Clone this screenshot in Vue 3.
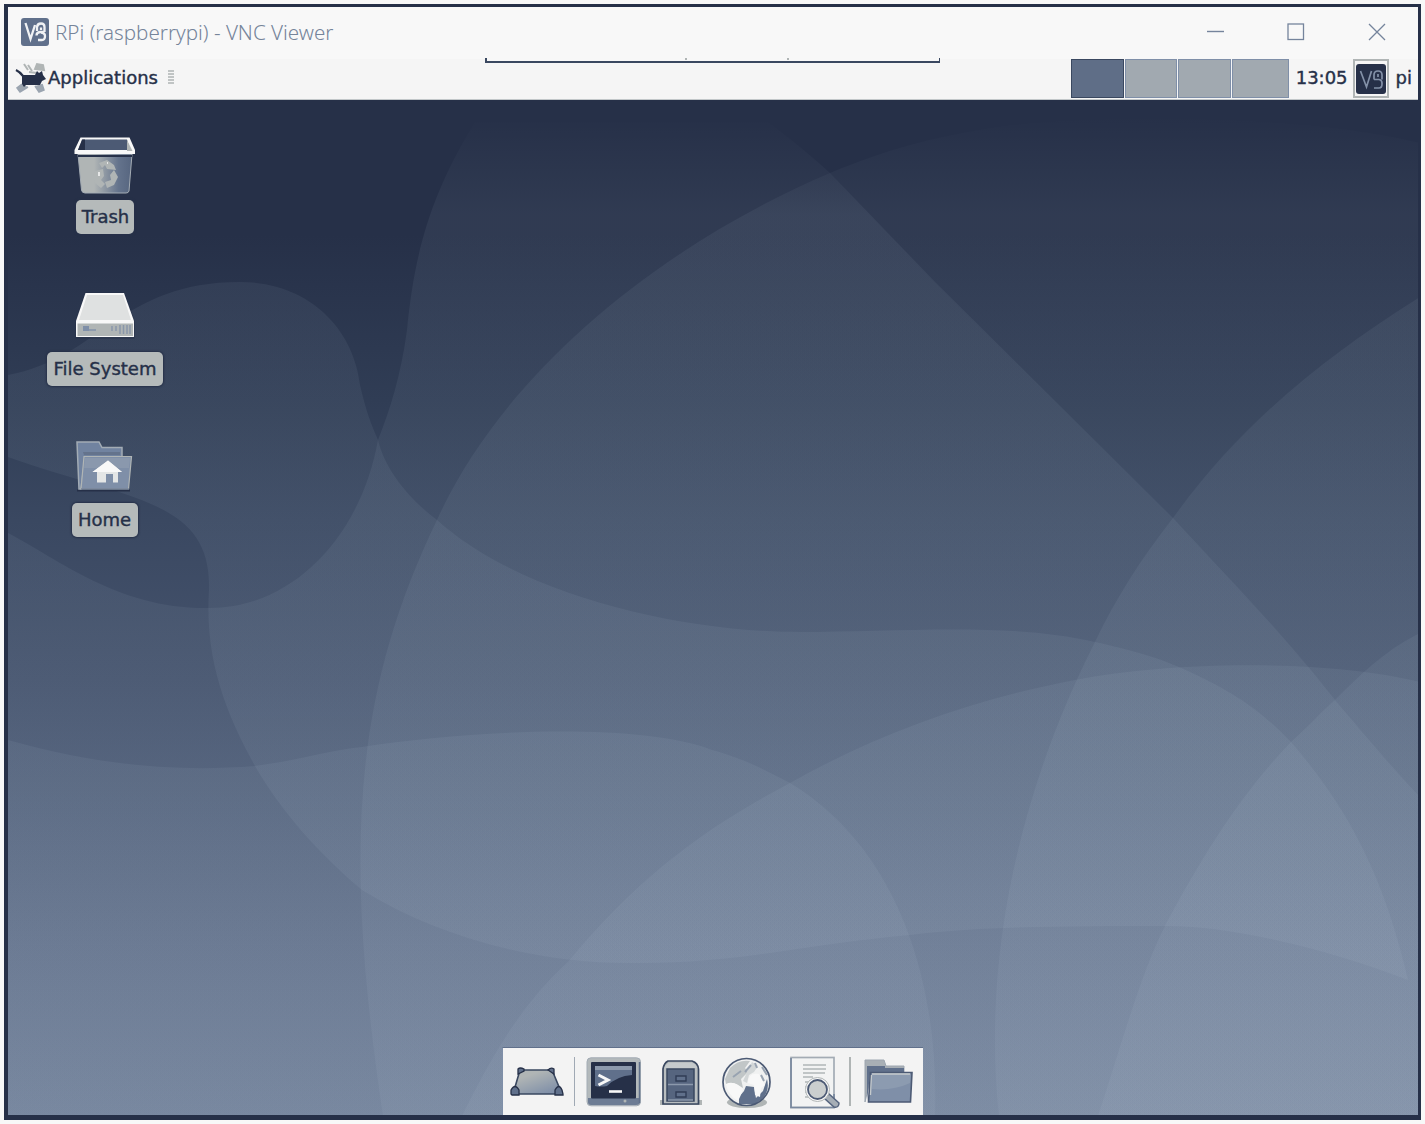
<script setup>
const workspaces = [
  { id: 1, active: true, w: 53 },
  { id: 2, active: false, w: 52 },
  { id: 3, active: false, w: 53 },
  { id: 4, active: false, w: 57 },
]
</script>

<template>
  <div class="screen">
    <div class="window">
      <header class="titlebar">
        <svg class="app-logo" width="28" height="28" viewBox="0 0 28 28">
          <rect width="28" height="28" rx="3" fill="#60708b" />
          <path d="M4.500 5 L9.500 21 L14 7 M16 13 V9 Q16.500 5.500 20 5.500 Q23.500 5.500 23.500 9 V14 M20 9.500 V12 M23.500 14 H19 Q15.500 14.500 15.500 17.500 M20 14.500 Q24 15 24 18 Q24 22 21 22 H17" fill="none" stroke="#f0f2f4" stroke-width="2.300" />
        </svg>
        <span class="title">RPi (raspberrypi) - VNC Viewer</span>
        <div class="controls">
          <svg width="18" height="18" viewBox="0 0 18 18"><path d="M1 8.500 H18" stroke="#75849c" stroke-width="1.400" /></svg>
          <svg width="18" height="18" viewBox="0 0 18 18"><rect x="1" y="1" width="15.500" height="15.500" fill="none" stroke="#75849c" stroke-width="1.300" /></svg>
          <svg width="18" height="18" viewBox="0 0 18 18"><path d="M1 1 L17 17 M17 1 L1 17" stroke="#75849c" stroke-width="1.300" /></svg>
        </div>
      </header>

      <div class="panel">
        <svg class="mouse" width="32" height="34" viewBox="0 0 32 34">
          <path d="M9 3 L13 9 M13 4 L17 10 M20 8 L22 3 L28 4 L29 9 Z M14 11 L22 12" fill="#b0b5b5" stroke="#b0b5b5" stroke-width="2" />
          <path d="M7 23 L2 27 L5 31 L13 26 M20 25 L24 31 L29 29 L27 23" fill="#9da6b0" stroke="#9aa4b0" stroke-width="1.500" />
          <path d="M1 9 Q5 11 8 15" fill="none" stroke="#263048" stroke-width="2.200" />
          <path d="M7 14 L20 14 L22 10 L24 12 L27 10 L28 14 L31 18 L27 20 L25 24 H21 L11 24 L9 26 L7 23 Z" fill="#263048" />
        </svg>
        <span class="menu">Applications</span>
        <div class="handle"><i v-for="n in 5" :key="n"></i></div>
        <div class="pager">
          <div v-for="w in workspaces" :key="w.id" class="ws" :class="{ active: w.active }" :style="{ width: w.w + 'px' }"></div>
        </div>
        <span class="clock">13:05</span>
        <div class="tray">
          <svg width="30" height="30" viewBox="0 0 30 30">
            <rect width="30" height="30" rx="3" fill="#263048" />
            <path d="M4.500 7 L10.500 23 L15.500 7 M18 15.500 V11 Q18 7 22 7 Q26 7 26 11 V15.500 M22 10 V13 M18 15.500 H23 Q26 16 26 19 V20 Q26 24 23 24 H18" fill="none" stroke="#8391a8" stroke-width="1.700" />
          </svg>
        </div>
        <span class="user">pi</span>
      </div>

      <main class="desktop">
        <svg class="wall" viewBox="8 100 1410 1015" preserveAspectRatio="none">
          <defs>
            <linearGradient id="base" gradientUnits="userSpaceOnUse" x1="0" y1="100" x2="0" y2="1115">
              <stop offset="0" stop-color="#263048" />
              <stop offset=".133" stop-color="#263048" />
              <stop offset=".295" stop-color="#303d55" />
              <stop offset=".414" stop-color="#3a4861" />
              <stop offset=".571" stop-color="#45536d" />
              <stop offset=".7" stop-color="#51607a" />
              <stop offset=".83" stop-color="#5f6e88" />
              <stop offset="1" stop-color="#6e7e97" />
            </linearGradient>
            <linearGradient id="veil" gradientUnits="userSpaceOnUse" x1="0" y1="115" x2="0" y2="1115">
              <stop offset="0" stop-color="#dcf0ff" stop-opacity="0" />
              <stop offset=".1" stop-color="#dcf0ff" stop-opacity=".056" />
              <stop offset=".6" stop-color="#dcf0ff" stop-opacity=".056" />
              <stop offset="1" stop-color="#dce8f4" stop-opacity=".05" />
            </linearGradient>
          </defs>
          <rect x="8" y="100" width="1410" height="1015" fill="url(#base)" />
          <g fill="url(#veil)">
            <path d="M1420 143 C1300 113 1080 113 985 129 C930 138 885 150 830 173 C650 250 500 380 437 520 C350 700 345 860 383 1116 H1420 Z" />
            <path d="M475 122 C427 200 414 260 407 330 C401 375 390 410 378 440 C360 540 290 608 210 608 C120 610 60 560 8 533 V1116 H1420 V797 C1385 760 1365 735 1335 700 C1280 630 1230 580 1173 518 L935 282 L830 173 C805 150 785 135 768 122 Z" />
            <path d="M8 375 C100 358 120 282 240 282 C310 282 354 330 360 385 C368 420 375 432 378 440 C385 470 410 500 437 520 C520 595 680 632 800 632 C900 632 1010 622 1095 642 C1140 652 1165 660 1190 672 C1240 695 1265 715 1291 742 C1350 810 1385 880 1408 980 C1330 950 1230 925 1165 926 C1080 926 980 926 910 935 C800 945 740 963 640 963 C540 965 440 938 362 890 C320 855 280 810 255 766 C230 720 204 665 209 590 C212 500 130 500 8 457 Z" />
            <path d="M1420 297 C1320 360 1240 425 1173 518 C1140 560 1115 600 1095 642 C1030 770 980 940 999 1116 H1420 Z" />
            <path d="M1420 633 C1385 650 1360 675 1335 700 C1320 713 1307 728 1291 742 C1235 800 1195 870 1165 926 C1140 975 1120 1050 1098 1116 H1420 Z" />
            <path d="M8 740 C100 766 180 772 255 766 C300 760 330 750 362 747 C470 730 640 722 712 750 C745 759 765 770 790 783 C885 840 940 960 935 1116 H8 Z" />
            <path d="M462 1116 C490 1060 520 1005 568 962 C640 875 705 828 790 783 C875 735 970 700 1075 680 C1180 660 1330 660 1420 682 V1116 Z" />
          </g>
        </svg>

        <div class="icons">
          <div class="item">
            <svg width="68" height="68" viewBox="0 0 68 68">
              <defs>
                <linearGradient id="bin" x1="0" x2="1"><stop offset=".3" stop-color="#b0b5b5" /><stop offset=".75" stop-color="#64738c" /><stop offset="1" stop-color="#56657f" /></linearGradient>
              </defs>
              <path d="M7 22 H61 L58 59 Q57.500 61 55 61 H14 Q11 61 10.500 58 Z" fill="url(#bin)" stroke="#a4acb4" stroke-width="1" />
              <path d="M7 23 H61 V25 H7 Z" fill="#263048" />
              <path d="M9.500 5.500 H58.500 L64 18 V22 H3.500 V18 Z" fill="#f8f8f8" />
              <path d="M11.500 7.500 H56 L59 18 H7 Z" fill="#4c5a74" />
              <path d="M11 7.500 H14 V18 H7 Z" fill="#263048" />
              <path d="M56 8 L61.500 19 H56 Z" fill="#b0b5b5" />
              <g fill="#b0b5b5"><path d="M28 31 L36 28 L43 33 L45 38 L36 37 L34 33 L31 36 Z" /><path d="M43 38 L47 45 L43 53 L36 56 L34 50 L40 48 L39 43 Z" /><path d="M24 39 L32 37 L33 44 L30 48 L34 52 L30 56 L24 51 L22 45 Z" /></g>
              <path d="M28 40 V44 M36 31 h1" stroke="#f8f8f8" stroke-width="1.500" />
            </svg>
            <span class="label">Trash</span>
          </div>
          <div class="item">
            <svg width="68" height="68" viewBox="0 0 68 68">
              <path d="M14 8 H53 L64 37 V54 Q64 55 62 55 H6 Q4 55 4 53 V37 Z" fill="#263048" opacity=".5" />
              <path d="M14.500 9 H53 L63 37 V53 H5 V37 Z" fill="#f8f8f8" />
              <path d="M16 11 H52 L60 36 H8 Z" fill="#dfe1e1" />
              <rect x="6.500" y="39.500" width="55.500" height="12.500" fill="#b0b5b5" />
              <rect x="12" y="42" width="6" height="5" fill="#7f8fa8" /><path d="M18 46 H25" stroke="#8d9aac" stroke-width="2" />
              <path d="M41 42 V47 M45 42 V47 M49 41 V50 M52.500 41 V50 M56 41 V50 M59 41 V50" stroke="#8997aa" stroke-width="1.500" />
            </svg>
            <span class="label">File System</span>
          </div>
          <div class="item">
            <svg width="68" height="68" viewBox="0 0 68 68">
              <path d="M6 55.500 H59" stroke="#263048" stroke-width="2" />
              <path d="M6 7 H28 L31 12.500 H51 V22 H14 L10 54 H8 Z" fill="#7183a0" stroke="#a3acb5" stroke-width="1.500" />
              <path d="M12 17 H49 V20 H13 Z" fill="#64738c" />
              <path d="M13 21.500 H60.500 L57.500 54 H10 Z" fill="#7f8fa8" stroke="#b0b5b5" stroke-width="1.200" />
              <path d="M14 23 H59 L58 33 H13 Z" fill="#8a98ad" />
              <path d="M10 54 H58" stroke="#60708b" />
              <path d="M37 25.500 L51 37 H47 V47.500 H42 V39 H35 V47.500 H26 V37 H21.500 Z" fill="#e4e6e6" />
              <path d="M37 25.500 L51 37 H21.500 Z" fill="#f8f8f8" />
            </svg>
            <span class="label">Home</span>
          </div>
        </div>

        <nav class="dock">
          <svg width="55" height="50" viewBox="0 0 55 50">
            <defs><linearGradient id="desk" x1="0" y1="0" x2=".7" y2="1"><stop offset=".3" stop-color="#b0b5b5" /><stop offset="1" stop-color="#7f8fa8" /></linearGradient></defs>
            <path d="M10 13 H42 L52 37 H3 Z" fill="url(#desk)" stroke="#3a4860" stroke-width="1.600" />
            <g fill="#60708b" stroke="#263048" stroke-width="1.300"><path d="M8 17 V12 Q10 10 14 12 V14 Z" /><path d="M38 13 Q41 10 44 12 V17 Z" /><path d="M1 37 V33 Q5 26 9 33 V38 H2 Z" /><path d="M45 38 V33 Q49 26 52 33 L53 37 V38 Z" /></g>
          </svg>
          <i class="sep"></i>
          <svg class="term" width="56" height="50" viewBox="0 0 56 50">
            <rect x="1" y=".8" width="53.500" height="48" rx="4" fill="#b3b9bb" stroke="#a3acb5" />
            <path d="M2 41 H54 V45 Q54 48 50 48 H5 Q2 48 2 45 Z" fill="#6d7c94" />
            <path d="M53.500 5 V46" stroke="#60708b" stroke-width="1.500" />
            <rect x="5" y="5" width="45" height="36.500" rx="1" fill="#263048" />
            <path d="M9 9 H46 V18 Q31 19 21 29 Q15 30 9 29 Z" fill="#60708b" />
            <path d="M9 9 H46 V13 H9 Z" fill="#8c99ac" />
            <path d="M12.500 18 L22 23 L12.500 28" fill="none" stroke="#f8f8f8" stroke-width="3" />
            <path d="M23 34.500 H36" stroke="#f8f8f8" stroke-width="2.600" />
            <circle cx="39" cy="44" r="1.500" fill="#b0b5b5" />
          </svg>
          <svg class="cab" width="42" height="50" viewBox="0 0 42 50">
            <path d="M0 43 H42 V48 H0 Z" fill="#b0b5b5" />
            <path d="M8 4 H32 Q38 6 38.500 12 V47 H3 V12 Q4 6 8 4 Z" fill="#b9bec0" stroke="#3a4860" stroke-width="1.700" />
            <path d="M9 6 H32 Q36 7 37 11 H4.500 Q6 7 9 6 Z" fill="#c5cacc" />
            <path d="M7 12 H34 V44 H7 Z" fill="#56657f" stroke="#3a4860" stroke-width="1.500" />
            <path d="M8 27.500 H33 M8 43 H33" stroke="#8c99ac" stroke-width="1.300" />
            <path d="M16 19 H26 V24 H16 Z M16 35 H26 V40 H16 Z" fill="#60708b" stroke="#303c56" stroke-width="1.400" />
          </svg>
          <svg class="globe" width="52" height="52" viewBox="0 0 52 52">
            <ellipse cx="26" cy="45.500" rx="20" ry="5.500" fill="#b0b5b5" />
            <circle cx="25.500" cy="25" r="23.500" fill="#f0f1f1" />
            <path d="M9 11 Q18 2 29 4 L24 11 L27 15 L20 22 L22 31 L13 26 L5 27 L4 22 Z" fill="#c1c6c7" />
            <path d="M31 5 L37 9 L33 15 L28 18 L26 26 L22 24 L28 11 Z" fill="#d3d7d8" />
            <path d="M18 40 L23 34 L25 29 L33 30 L36 47 H18 Z" fill="#60708b" />
            <path d="M46 22 Q50 38 35 46 L34 42 L42 34 L44 28 Z" fill="#60708b" />
            <path d="M5 27 Q13 23 22 32 L19 40 L17 44 Q7 38 5 27 Z M27 26 Q27 15 38 17 L44 28 L40 31 L39 40 L34 38 L33 28 Z" fill="#f8f8f8" />
            <path d="M20 14 L12 20 M30 8 L24 15 M34 6 L36 11 M41 10 L46 18 M40 18 L43 24" fill="none" stroke="#98a3b1" stroke-width="2" />
            <circle cx="25.500" cy="25" r="23.500" fill="none" stroke="#4c5a74" stroke-width="1.700" />
          </svg>
          <svg class="find" width="52" height="54" viewBox="0 0 52 54">
            <rect x="2" y="1.500" width="43" height="50" fill="#f2f3f3" stroke="#a3abb4" stroke-width="1.700" />
            <path d="M2 2 V51.500 H45 V38" fill="none" stroke="#7a899f" stroke-width="1.700" />
            <path d="M14 9 H37 M14 13 H37 M14 17 H36 M14 21 H24 M16 26 H20 M16 31 H19 M16 36 H18 M16 41 H21" stroke="#c0c5c6" stroke-width="2" />
            <path d="M35 42 L40 38 L50 47 Q50 52 45 51 Z" fill="#a6aeb6" stroke="#56657f" stroke-width="1.500" />
            <circle cx="28.500" cy="33.500" r="12" fill="#f8f8f8" stroke="#b0b5b5" stroke-width="1" />
            <circle cx="28.500" cy="33.500" r="9.500" fill="#cacece" stroke="#4c5a74" stroke-width="1.800" />
          </svg>
          <i class="sep second"></i>
          <svg class="folder" width="52" height="50" viewBox="0 0 52 50">
            <path d="M3 45 V3 H22 L24 9 H42 V19 H9 Z" fill="#a8afb5" stroke="#9da6b0" />
            <path d="M5 44 V9 H23 V11 H42 V17 H8 Z" fill="#60708b" />
            <path d="M8.500 15.500 H50 L48.500 45 H6.500 Z" fill="#7f8fa8" stroke="#4c5a74" stroke-width="1.600" />
            <path d="M10 17 H48.500 L48 26 Q31 34 10 32 Z" fill="#8c9bb0" />
            <path d="M10 17 H48 M9.500 18 L8.500 38" fill="none" stroke="#c5cacc" stroke-width="1.300" />
          </svg>
        </nav>
      </main>
      <div class="toolbar-tab"><i></i><i></i></div>
    </div>
  </div>
</template>

<style>
body { background: #f8f8f8; }
</style>

<style scoped>
.screen { box-sizing: border-box; width: 1425px; height: 1124px; padding: 4px; background: #f8f8f8; overflow: hidden; }
.window { position: relative; box-sizing: border-box; width: 1417px; height: 1116px; border: solid #263048; border-width: 3px 3px 5px 4px; background: #f8f8f8; font-family: "DejaVu Sans", sans-serif; display: flex; flex-direction: column; }
.titlebar { height: 52px; flex: none; display: flex; align-items: center; }
.app-logo { margin: -2px 0 0 13px; }
.title { margin: -3px 0 0 6px; font-family: "Noto Sans", sans-serif; font-size: 20.6px; font-weight: 300; color: #75849a; white-space: nowrap; }
.controls { margin-left: auto; margin-right: 32px; display: flex; gap: 63px; padding-bottom: 3px; }
.panel { height: 41px; flex: none; display: flex; box-sizing: border-box; border-bottom: 1px solid #c2c7c9; color: #263048; font-size: 18px; background: #f5f5f5; }
.panel span { line-height: 37px; white-space: nowrap; -webkit-text-stroke: 0.4px #263048; }
.mouse { margin: 2px 0 0 7px; flex: none; }
.menu { margin-left: 1px; }
.handle { margin: 11px 0 0 10px; display: flex; flex-direction: column; gap: 1px; }
.handle i { width: 6px; height: 2px; background: #c0c4c4; }
.pager { margin-left: auto; display: flex; gap: 1px; }
.ws { box-sizing: border-box; height: 39px; border: 1px solid #7f8fa8; background: #a1a9b0; }
.ws.active { background: #5f6e87; border-color: #3a4860; }
.clock { margin-left: 7px; }
.tray { box-sizing: border-box; width: 36px; height: 39px; margin-left: 5px; border: 2px solid #b0b5b5; display: flex; align-items: center; justify-content: center; }
.user { margin: 0 6px 0 7px; }
.desktop { position: relative; flex: 1; overflow: hidden; background: #263048; }
.wall { position: absolute; inset: 0; width: 100%; height: 100%; }
.icons { position: absolute; left: 37px; top: 32px; width: 120px; display: flex; flex-direction: column; }
.item { height: 151.5px; display: flex; flex-direction: column; align-items: center; }
.item svg { flex: none; }
.label { box-sizing: border-box; height: 34px; padding: 0 7px; border-radius: 5px; background: #b5baba; box-shadow: 0 0 2px 1px #263048; color: #263048; font-size: 18px; line-height: 34px; white-space: nowrap; -webkit-text-stroke: 0.4px #263048; }
.item:first-child .label { padding: 0 5px 0 6px; }
.item:last-child .label { padding: 0 7px 0 6px; }
.dock { position: absolute; left: 494px; bottom: 0; box-sizing: border-box; width: 421px; height: 68px; border-top: 1px solid #60708b; border-left: 1px solid #7f8fa8; background: #f3f3f3; display: flex; align-items: flex-start; padding: 8px 0 0 7px; }
.dock svg { flex: none; margin-top: 1px; }
.sep { width: 1px; height: 49px; margin: 1px 0 0 9px; background: #a0a9b4; flex: none; }
.sep.second { width: 2px; margin-left: 8px; background: #b0b5b5; }
.dock .term { margin-left: 11px; }
.dock .cab { margin: 1px 0 0 18px; }
.dock .globe { margin: 1px 0 0 19px; }
.dock .find { margin: 0 0 0 16px; }
.dock .folder { margin: 1px 0 0 11px; }
.toolbar-tab { position: absolute; left: 477px; top: 51px; box-sizing: border-box; width: 455px; height: 5px; background: #f8f8f8; border: solid #3a4860; border-width: 0 1px 2px 2px; display: flex; justify-content: center; gap: 100px; }
.toolbar-tab i { width: 2px; height: 2px; background: #b0b5b5; }
.toolbar-tab i:first-child { margin-left: 48px; }
</style>
